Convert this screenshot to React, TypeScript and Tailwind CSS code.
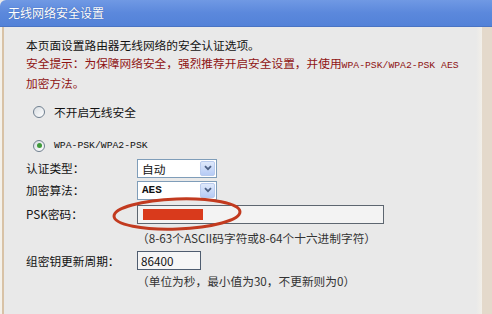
import React from "react";

const CN = "font-['SimSun','Noto_Sans_CJK_SC',sans-serif]";
const MONO = "font-['Liberation_Mono','Courier_New',monospace]";

function Radio({ checked }: { checked?: boolean }) {
  return (
    <span className="flex h-[12px] w-[12px] items-center justify-center rounded-full border border-[#6f7f8f] bg-gradient-to-br from-[#d8dde2] to-white">
      {checked && <span className="h-[5px] w-[5px] rounded-full bg-[#3f9a3a]" />}
    </span>
  );
}

function Select({ value, mono }: { value: string; mono?: boolean }) {
  return (
    <div className="flex h-[19px] w-[80px] items-stretch border border-[#7f9db9] bg-white">
      <span className={`flex-1 pl-[4px] leading-[17px] ${mono ? `${MONO} text-[11px] font-bold` : ""}`}>{value}</span>
      <span className="m-[1px] flex w-[15px] items-center justify-center rounded-[2px] border border-[#b9cbee] bg-gradient-to-b from-[#dfe9fb] to-[#b6cbf5]">
        <svg width="8" height="6" viewBox="0 0 8 6">
          <path d="M1 1.2 L4 4.2 L7 1.2" fill="none" stroke="#4d6185" strokeWidth="1.8" />
        </svg>
      </span>
    </div>
  );
}

export default function App() {
  return (
    <div className={`relative flex h-[314px] w-[492px] flex-col overflow-hidden bg-[#e9e9e9] text-[11.7px] text-[#111] ${CN}`}>
      {/* title bar */}
      <div className="flex h-[27px] items-center rounded-tl-[6px] border-b border-[#4a74c4] bg-gradient-to-b from-[#7099e4] via-[#5b88dc] to-[#5382d8] pl-[8px] text-[12px] text-white [text-shadow:0_0_1px_#2d4f95]">
        无线网络安全设置
      </div>

      <div className="flex flex-1">
        {/* left edge */}
        <div className="w-[2px] bg-[#f4f1ea]" />
        <div className="w-[2px] bg-[#d8c2a6]" />

        <div className="flex-1 pl-[22px] pt-[9px] leading-[17.5px]">
          <p>本页面设置路由器无线网络的安全认证选项。</p>
          <p className="text-[#8f1414]">
            安全提示：为保障网络安全，强烈推荐开启安全设置，并使用<span className={`${MONO} text-[9.75px]`}>WPA-PSK/WPA2-PSK AES</span>
          </p>
          <p className="text-[#8f1414]">加密方法。</p>

          <div className="mt-[11px] flex h-[18px] items-center gap-[9px] pl-[7px]">
            <Radio />
            <span>不开启无线安全</span>
          </div>

          <div className="mt-[16px] flex h-[18px] items-center gap-[9px] pl-[7px]">
            <Radio checked />
            <span className={`${MONO} text-[9.75px]`}>WPA-PSK/WPA2-PSK</span>
          </div>

          <div className="mt-[4px] flex items-center">
            <span className="w-[111px]">认证类型：</span>
            <Select value="自动" />
          </div>

          <div className="mt-[3px] flex items-center">
            <span className="w-[111px]">加密算法：</span>
            <Select value="AES" mono />
          </div>

          <div className="mt-[5px] flex items-center">
            <span className="w-[111px]">PSK密码：</span>
            <div className="flex h-[19px] w-[247px] items-center border border-[#5d6670] bg-[#f3f3f3] pl-[5px]">
              <span className="h-[11px] w-[60px] bg-[#d93a1c]" />
            </div>
          </div>

          <p className="mt-[5px] pl-[111px] text-[#333]">（8-63个ASCII码字符或8-64个十六进制字符）</p>

          <div className="mt-[5px] flex items-center">
            <span className="w-[111px]">组密钥更新周期：</span>
            <div className="flex h-[19px] w-[64px] items-center border border-[#4f5d70] bg-[#f6f6f6] pl-[3px]">
              86400
            </div>
          </div>

          <p className="mt-[2px] pl-[111px] text-[#333]">（单位为秒，最小值为30，不更新则为0）</p>
        </div>

        {/* right strip */}
        <div className="w-[6px] bg-gradient-to-r from-[#e9e9e9] to-[#f2efe9]" />
        <div className="w-[10px] bg-[#e4d9cb]" />
      </div>

      {/* red ellipse annotation over the PSK field */}
      <svg className="pointer-events-none absolute left-[110px] top-[195px]" width="134" height="38" viewBox="0 0 134 38">
        <ellipse cx="67" cy="19" rx="63" ry="15" fill="none" stroke="#c23a1f" strokeWidth="3" transform="rotate(-2 67 19)" />
      </svg>
    </div>
  );
}
